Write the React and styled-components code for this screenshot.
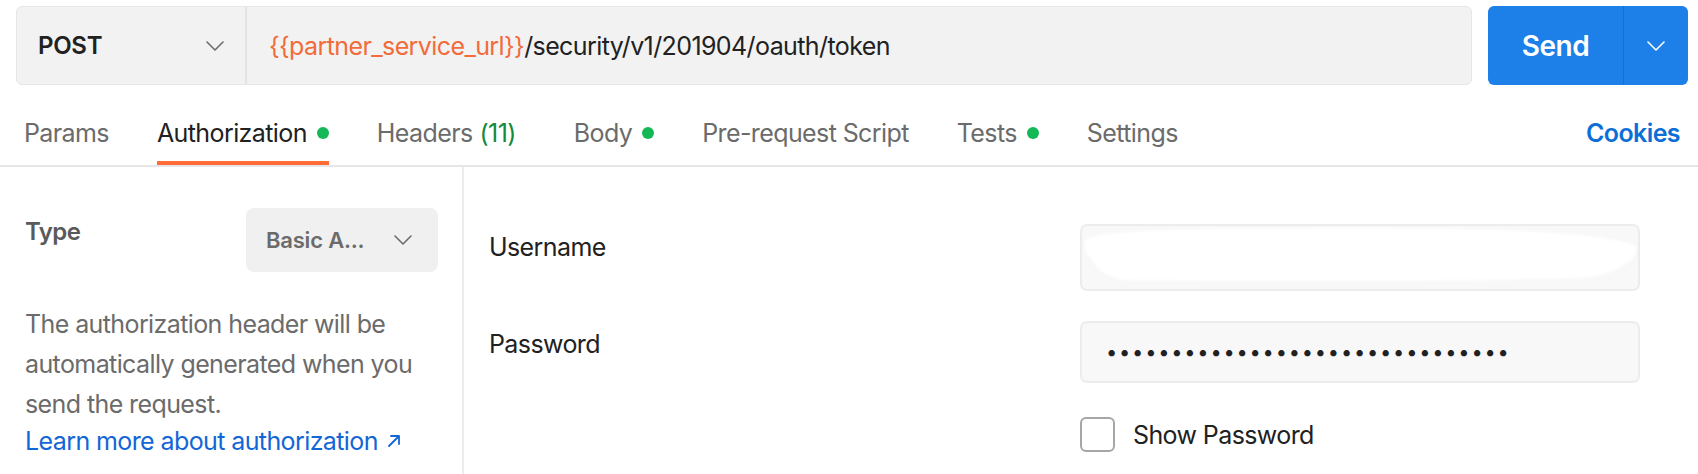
import React from "react";
import styled, { createGlobalStyle } from "styled-components";

const GlobalStyle = createGlobalStyle`
  body {
    margin: 0;
    background: #ffffff;
    font-family: Inter, "Noto Sans", sans-serif;
    color: #212121;
  }
`;

const Page = styled.div`
  width: 1698px;
  height: 474px;
  overflow: hidden;
  background: #ffffff;
  font-size: 25px;
  letter-spacing: -0.6px;
`;

const RequestBar = styled.div`
  display: flex;
  gap: 16px;
  padding: 6px 10px 0 16px;
  height: 79px;
`;

const UrlBox = styled.div`
  flex: 1;
  display: flex;
  background: #f2f2f2;
  border: 1px solid #e6e6e6;
  border-radius: 6px;
`;

const MethodSelect = styled.div`
  width: 230px;
  flex-shrink: 0;
  display: flex;
  align-items: center;
  justify-content: space-between;
  padding: 0 21px 0 21px;
  box-sizing: border-box;
  border-right: 2px solid #e4e4e4;
  font-weight: 600;
  font-size: 24px;
  letter-spacing: -0.3px;
  color: #212121;
`;

const UrlText = styled.div`
  display: flex;
  align-items: center;
  padding-left: 22px;
  color: #212121;
`;

const Variable = styled.span`
  color: #f26b3a;
`;

const SendGroup = styled.div`
  width: 200px;
  display: flex;
  background: #1d7fe8;
  border-radius: 6px;
  color: #ffffff;
`;

const SendButton = styled.div`
  flex: 1;
  display: flex;
  align-items: center;
  justify-content: center;
  font-weight: 600;
  font-size: 28px;
  letter-spacing: -0.5px;
`;

const SendMenu = styled.div`
  width: 64px;
  display: flex;
  align-items: center;
  justify-content: center;
  border-left: 1px solid #1670d2;
`;

const TabsRow = styled.div`
  display: flex;
  align-items: flex-end;
  padding: 0 18px 0 24px;
  border-bottom: 2px solid #e6e6e6;
  height: 80px;
  gap: 48px;
`;

const Tab = styled.div`
  display: flex;
  align-items: center;
  gap: 10px;
  padding: 35px 0 ${(p) => (p.$active ? "14px" : "18px")};
  line-height: 28px;
  color: ${(p) => (p.$active ? "#212121" : "#6b6b6b")};
  border-bottom: ${(p) => (p.$active ? "4px solid #ff6c37" : "none")};
  margin-right: ${(p) => p.$extra || 0}px;
`;

const Dot = styled.span`
  width: 12px;
  height: 12px;
  border-radius: 50%;
  background: #14b856;
`;

const Count = styled.span`
  color: #138a3c;
  margin-left: -3px;
`;

const CookiesLink = styled.div`
  margin-left: auto;
  padding: 35px 0 18px;
  line-height: 28px;
  font-weight: 600;
  color: #0d6fd6;
`;

const Content = styled.div`
  display: flex;
  height: 307px;
`;

const LeftPanel = styled.div`
  width: 464px;
  flex-shrink: 0;
  box-sizing: border-box;
  padding: 41px 24px 0 25px;
  border-right: 2px solid #ececec;
`;

const TypeRow = styled.div`
  display: flex;
  justify-content: space-between;
  align-items: flex-start;
`;

const TypeLabel = styled.div`
  margin-top: 10px;
  font-size: 24px;
  line-height: 28px;
  font-weight: 600;
  color: #5a5a5a;
`;

const TypeSelect = styled.div`
  width: 192px;
  height: 64px;
  box-sizing: border-box;
  display: flex;
  align-items: center;
  justify-content: space-between;
  padding: 0 26px 0 20px;
  background: #f0f0f0;
  border-radius: 8px;
  font-size: 22px;
  letter-spacing: -0.2px;
  font-weight: 600;
  color: #6b6b6b;
`;

const Description = styled.p`
  margin: 32px 0 0;
  line-height: 40px;
  color: #6b6b6b;
`;

const LearnLink = styled.div`
  display: flex;
  align-items: center;
  gap: 9px;
  line-height: 34px;
  color: #1366d6;
`;

const RightPanel = styled.div`
  flex: 1;
  display: flex;
  flex-direction: column;
  gap: 30px;
  padding: 57px 56px 0 25px;
`;

const FieldRow = styled.div`
  display: grid;
  grid-template-columns: 591px 560px;
  align-items: start;
`;

const FieldLabel = styled.div`
  margin-top: 9px;
  line-height: 28px;
  color: #212121;
`;

const Field = styled.div`
  position: relative;
  height: ${(p) => p.$h}px;
  box-sizing: border-box;
  display: flex;
  align-items: center;
  padding-left: 24px;
  background: #f8f8f8;
  border: 2px solid #ececec;
  border-radius: 7px;
  overflow: hidden;
`;

const Redaction = styled.svg`
  position: absolute;
  left: 0;
  top: 0;
`;

const Dots = styled.span`
  font-size: 20px;
  letter-spacing: 1.8px;
  color: #212121;
`;

const CheckRow = styled.div`
  display: flex;
  align-items: center;
  gap: 18px;
  margin-left: 591px;
  margin-top: 4px;
`;

const CheckBox = styled.div`
  width: 35px;
  height: 35px;
  box-sizing: border-box;
  border: 2px solid #a6a6a6;
  border-radius: 6px;
`;

const CheckLabel = styled.div`
  color: #212121;
`;

const Chevron = ({ color = "#6b6b6b" }) => (
  <svg width="18" height="10" viewBox="0 0 18 10" fill="none">
    <path d="M1 1l8 8 8-8" stroke={color} strokeWidth="1.6" strokeLinecap="round" strokeLinejoin="round" />
  </svg>
);

const ExternalArrow = () => (
  <svg width="14" height="14" viewBox="0 0 14 14" fill="none">
    <path d="M2 12L12 2M4 2h8v8" stroke="#1366d6" strokeWidth="1.8" strokeLinecap="round" strokeLinejoin="round" />
  </svg>
);

export default function App() {
  return (
    <Page>
      <GlobalStyle />
      <RequestBar>
        <UrlBox>
          <MethodSelect>
            POST
            <Chevron />
          </MethodSelect>
          <UrlText>
            <Variable>{"{{partner_service_url}}"}</Variable>/security/v1/201904/oauth/token
          </UrlText>
        </UrlBox>
        <SendGroup>
          <SendButton>Send</SendButton>
          <SendMenu>
            <Chevron color="#ffffff" />
          </SendMenu>
        </SendGroup>
      </RequestBar>

      <TabsRow>
        <Tab>Params</Tab>
        <Tab $active>
          Authorization <Dot />
        </Tab>
        <Tab $extra={10}>
          Headers <Count>(11)</Count>
        </Tab>
        <Tab>
          Body <Dot />
        </Tab>
        <Tab>Pre-request Script</Tab>
        <Tab>
          Tests <Dot />
        </Tab>
        <Tab>Settings</Tab>
        <CookiesLink>Cookies</CookiesLink>
      </TabsRow>

      <Content>
        <LeftPanel>
          <TypeRow>
            <TypeLabel>Type</TypeLabel>
            <TypeSelect>
              Basic A...
              <Chevron />
            </TypeSelect>
          </TypeRow>
          <Description>
            The authorization header will be automatically generated when you send the request.
          </Description>
          <LearnLink>
            Learn more about authorization <ExternalArrow />
          </LearnLink>
        </LeftPanel>

        <RightPanel>
          <FieldRow>
            <FieldLabel>Username</FieldLabel>
            <Field $h={67}>
              <Redaction width="560" height="67" viewBox="0 0 560 67">
                <defs>
                  <filter id="soft">
                    <feGaussianBlur stdDeviation="1.2" />
                  </filter>
                </defs>
                <path
                  d="M4 14 C20 4, 100 2, 300 2 C420 3, 520 6, 553 20 C557 30, 546 37, 540 40 C530 47, 518 50, 498 52 C400 55, 200 56, 42 54 C22 50, 14 42, 10 33 C2 28, 1 18, 4 14 Z"
                  fill="#ffffff"
                  filter="url(#soft)"
                />
              </Redaction>
            </Field>
          </FieldRow>
          <FieldRow>
            <FieldLabel>Password</FieldLabel>
            <Field $h={62}>
              <Dots>{"•".repeat(31)}</Dots>
            </Field>
          </FieldRow>
          <CheckRow>
            <CheckBox />
            <CheckLabel>Show Password</CheckLabel>
          </CheckRow>
        </RightPanel>
      </Content>
    </Page>
  );
}
